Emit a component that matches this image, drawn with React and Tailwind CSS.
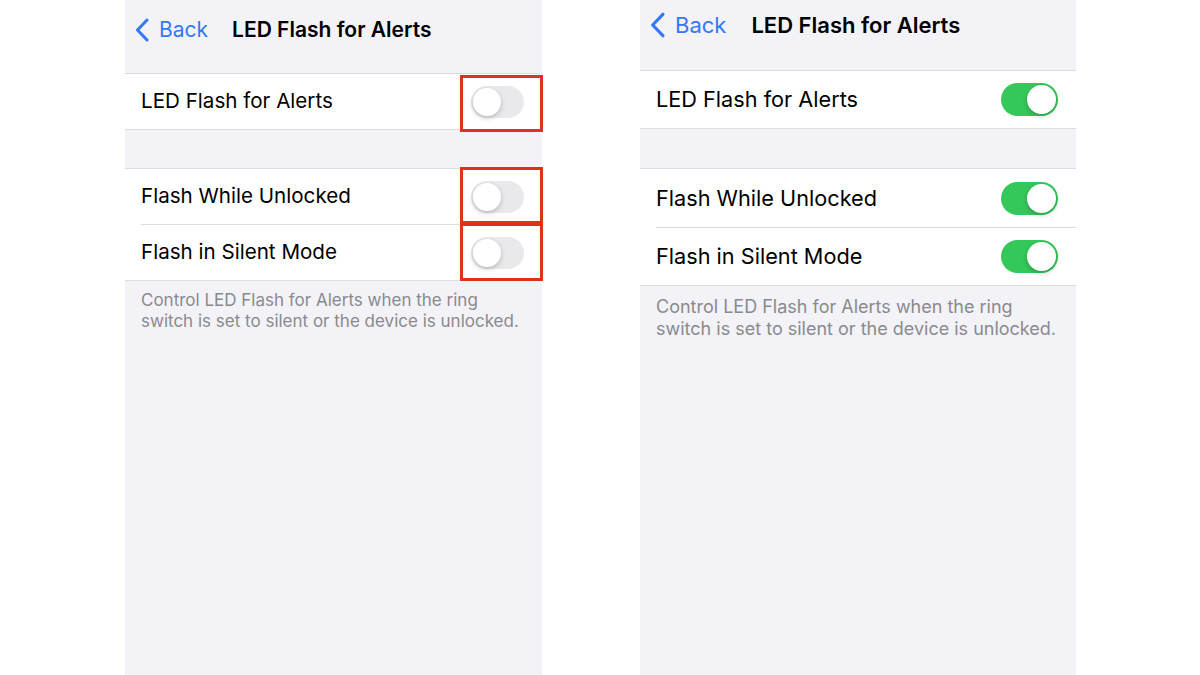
import React from "react";

const font = { fontFamily: "Inter, 'Liberation Sans', sans-serif" };

function Chevron({ className }) {
  return (
    <svg viewBox="0 0 14 24" className={className} fill="none">
      <path d="M12 2 L2.5 12 L12 22" stroke="#3478f6" strokeWidth="3" strokeLinecap="round" strokeLinejoin="round" />
    </svg>
  );
}

function Toggle({ on, size }) {
  const big = size === "lg";
  const track = big ? "w-[57px] h-[33px]" : "w-[53px] h-[32px]";
  const knob = big ? "w-[29px] h-[29px]" : "w-[28px] h-[28px]";
  return (
    <div className={`${track} rounded-full p-[2px] flex ${on ? "bg-[#34c759] justify-end" : "bg-[#e9e9eb] justify-start"}`}>
      <div className={`${knob} rounded-full bg-white shadow-[0_2px_5px_rgba(0,0,0,0.22)]`} />
    </div>
  );
}

function LeftPanel() {
  return (
    <div className="w-[417px] h-[675px] bg-[#f2f2f7] flex flex-col shrink-0">
      <div className="h-[73px] flex items-center pl-[10px] pb-[13px]">
        <Chevron className="w-[14px] h-[24px]" />
        <span className="ml-[10px] text-[21px] text-[#3478f6]">Back</span>
        <span className="ml-[24px] text-[21px] font-semibold text-black">LED Flash for Alerts</span>
      </div>
      <div className="bg-white border-y border-[#dcdce0]">
        <div className="relative h-[55px] flex items-center justify-between pl-[16px] pr-[18px]">
          <span className="text-[20.6px] text-black">LED Flash for Alerts</span>
          <Toggle on={false} />
          <div className="absolute right-[-1px] top-[1px] w-[83px] h-[57px] border-[3px] border-[#e0311f]" />
        </div>
      </div>
      <div className="h-[38px]" />
      <div className="bg-white border-y border-[#dcdce0]">
        <div className="relative h-[55px] flex items-center justify-between pl-[16px] pr-[18px]">
          <span className="text-[20.6px] text-black">Flash While Unlocked</span>
          <Toggle on={false} />
          <div className="absolute right-[-1px] top-[-2px] w-[83px] h-[57px] border-[3px] border-[#e0311f]" />
        </div>
        <div className="ml-[16px] border-t border-[#dcdce0]" />
        <div className="relative h-[55px] flex items-center justify-between pl-[16px] pr-[18px]">
          <span className="text-[20.6px] text-black">Flash in Silent Mode</span>
          <Toggle on={false} />
          <div className="absolute right-[-1px] top-[-2px] w-[83px] h-[58px] border-[3px] border-[#e0311f]" />
        </div>
      </div>
      <p className="pl-[16px] pr-[12px] pt-[9px] text-[17px] leading-[21px] text-[#8a8a8e]">
        Control LED Flash for Alerts when the ring switch is set to silent or the device is unlocked.
      </p>
    </div>
  );
}

function RightPanel() {
  return (
    <div className="w-[436px] h-[675px] bg-[#f2f2f7] flex flex-col shrink-0">
      <div className="h-[70px] flex items-center pl-[10px] pb-[20px]">
        <Chevron className="w-[15px] h-[26px]" />
        <span className="ml-[10px] text-[22px] text-[#3478f6]">Back</span>
        <span className="ml-[25px] text-[22px] font-semibold text-black">LED Flash for Alerts</span>
      </div>
      <div className="bg-white border-y border-[#dcdce0]">
        <div className="h-[57px] flex items-center justify-between pl-[16px] pr-[18px]">
          <span className="text-[21.7px] text-black">LED Flash for Alerts</span>
          <Toggle on size="lg" />
        </div>
      </div>
      <div className="h-[39px]" />
      <div className="bg-white border-y border-[#dcdce0]">
        <div className="h-[58px] flex items-center justify-between pl-[16px] pr-[18px]">
          <span className="text-[21.7px] text-black">Flash While Unlocked</span>
          <Toggle on size="lg" />
        </div>
        <div className="ml-[16px] border-t border-[#dcdce0]" />
        <div className="h-[57px] flex items-center justify-between pl-[16px] pr-[18px]">
          <span className="text-[21.7px] text-black">Flash in Silent Mode</span>
          <Toggle on size="lg" />
        </div>
      </div>
      <p className="pl-[16px] pr-[12px] pt-[10px] text-[18px] leading-[22px] text-[#8a8a8e]">
        Control LED Flash for Alerts when the ring switch is set to silent or the device is unlocked.
      </p>
    </div>
  );
}

export default function App() {
  return (
    <div className="w-[1200px] h-[675px] bg-white flex overflow-hidden" style={font}>
      <div className="ml-[125px]">
        <LeftPanel />
      </div>
      <div className="ml-[98px]">
        <RightPanel />
      </div>
    </div>
  );
}
